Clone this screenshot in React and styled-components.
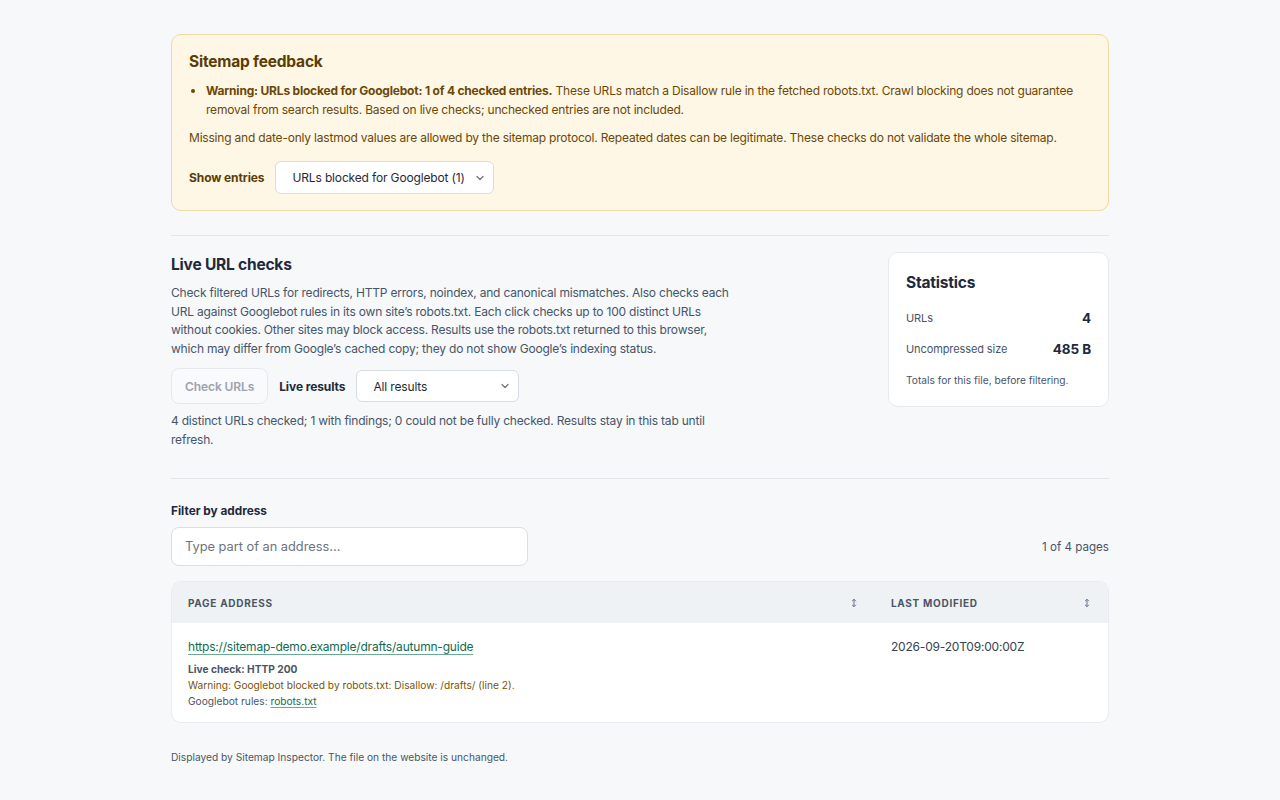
import React, { useState } from 'react';
import styled, { createGlobalStyle } from 'styled-components';

const GlobalStyle = createGlobalStyle`
    body {
        margin: 0;
        background: #f6f8fa;
        font-family: Inter, "Noto Sans", "Liberation Sans", sans-serif;
        color: #1e293b;
    }
    * { box-sizing: border-box; }
`

const Chevron = () => (
    <svg width="10" height="10" viewBox="0 0 10 10" fill="none">
        <path d="M2 3.5 L5 6.5 L8 3.5" stroke="#6b7280" strokeWidth="1.2" strokeLinecap="round" strokeLinejoin="round" />
    </svg>
)

const SortIcon = () => (
    <svg width="6" height="10" viewBox="0 0 6 10" fill="none">
        <path d="M3 1.5 V8.5 M1.3 3 L3 1.3 L4.7 3 M1.3 7 L3 8.7 L4.7 7" stroke="#64748b" strokeWidth="1" strokeLinecap="round" strokeLinejoin="round" />
    </svg>
)

const SelectBox = ({ value, width, height }) => (
    <StyledSelect $width={width} $height={height}>
        <span>{value}</span>
        <Chevron />
    </StyledSelect>
)

export default function App() {
    const [query, setQuery] = useState('');

    return (
        <Page>
            <GlobalStyle />
            <Feedback>
                <FeedbackTitle>Sitemap feedback</FeedbackTitle>
                <FeedbackList>
                    <li>
                        <strong>Warning: URLs blocked for Googlebot: 1 of 4 checked entries.</strong> These URLs match a Disallow rule in the fetched robots.txt. Crawl blocking does not guarantee removal from search results. Based on live checks; unchecked entries are not included.
                    </li>
                </FeedbackList>
                <FeedbackNote>
                    Missing and date-only lastmod values are allowed by the sitemap protocol. Repeated dates can be legitimate. These checks do not validate the whole sitemap.
                </FeedbackNote>
                <ControlRow $inBox>
                    <ControlLabel $tone="brown">Show entries</ControlLabel>
                    <SelectBox value="URLs blocked for Googlebot (1)" width={219} height={33} />
                </ControlRow>
            </Feedback>

            <Divider $top={24} $bottom={16} />

            <ChecksSection>
                <ChecksMain>
                    <SectionTitle>Live URL checks</SectionTitle>
                    <BodyText $after={10}>
                        Check filtered URLs for redirects, HTTP errors, noindex, and canonical mismatches. Also checks each URL against Googlebot rules in its own site’s robots.txt. Each click checks up to 100 distinct URLs without cookies. Other sites may block access. Results use the robots.txt returned to this browser, which may differ from Google’s cached copy; they do not show Google’s indexing status.
                    </BodyText>
                    <ControlRow>
                        <CheckButton disabled>Check URLs</CheckButton>
                        <ControlLabel>Live results</ControlLabel>
                        <SelectBox value="All results" width={163} height={32} />
                    </ControlRow>
                    <BodyText $after={0}>
                        4 distinct URLs checked; 1 with findings; 0 could not be fully checked. Results stay in this tab until refresh.
                    </BodyText>
                </ChecksMain>

                <StatsCard>
                    <StatsTitle>Statistics</StatsTitle>
                    <StatRow>
                        <span>URLs</span>
                        <StatValue>4</StatValue>
                    </StatRow>
                    <StatRow>
                        <span>Uncompressed size</span>
                        <StatValue>485 B</StatValue>
                    </StatRow>
                    <StatsNote>Totals for this file, before filtering.</StatsNote>
                </StatsCard>
            </ChecksSection>

            <Divider $top={29} $bottom={25} />

            <FilterLabel htmlFor="filter">Filter by address</FilterLabel>
            <FilterRow>
                <FilterInput
                    id="filter"
                    placeholder="Type part of an address..."
                    value={query}
                    onChange={e => setQuery(e.target.value)}
                />
                <PageCount>1 of 4 pages</PageCount>
            </FilterRow>

            <Table>
                <HeadRow>
                    <HeadCell>
                        Page address
                        <SortIcon />
                    </HeadCell>
                    <HeadCell>
                        Last modified
                        <SortIcon />
                    </HeadCell>
                </HeadRow>
                <BodyRow>
                    <BodyCell>
                        <UrlLink href="#">https://sitemap-demo.example/drafts/autumn-guide</UrlLink>
                        <Detail $bold>Live check: HTTP 200</Detail>
                        <Detail $tone="warn">Warning: Googlebot blocked by robots.txt: Disallow: /drafts/ (line 2).</Detail>
                        <Detail>Googlebot rules: <SmallLink href="#">robots.txt</SmallLink></Detail>
                    </BodyCell>
                    <BodyCell>
                        <DateText>2026-09-20T09:00:00Z</DateText>
                    </BodyCell>
                </BodyRow>
            </Table>

            <Footer>Displayed by Sitemap Inspector. The file on the website is unchanged.</Footer>
        </Page>
    )
}

const Page = styled.main`
    width: 938px;
    margin: 0 auto;
    padding: 34px 0 30px;
`

const Feedback = styled.section`
    background: #fef7e5;
    border: 1px solid #efd9a6;
    border-radius: 10px;
    padding: 17px 17px 16px;
    color: #6b4708;
`

const FeedbackTitle = styled.h2`
    margin: 0 0 9px;
    font-size: 15.5px;
    letter-spacing: -0.2px;
    font-weight: 700;
    line-height: 20px;
    color: #5c3c06;
`

const FeedbackList = styled.ul`
    margin: 0 0 9px;
    padding-left: 17px;
    font-size: 12px;
    letter-spacing: -0.2px;
    line-height: 19px;
    strong { font-weight: 700; }
`

const FeedbackNote = styled.p`
    margin: 0 0 14px;
    font-size: 12px;
    letter-spacing: -0.2px;
    line-height: 19px;
`

const ControlRow = styled.div`
    display: flex;
    align-items: center;
    gap: 11px;
    margin: ${p => p.$inBox ? '0' : '0 0 8px'};
`

const ControlLabel = styled.span`
    font-size: 12px;
    letter-spacing: -0.1px;
    font-weight: 700;
    color: ${p => p.$tone === 'brown' ? '#5c3c06' : '#1e293b'};
`

const StyledSelect = styled.div`
    display: flex;
    align-items: center;
    justify-content: space-between;
    width: ${p => p.$width}px;
    height: ${p => p.$height}px;
    padding: 0 8px 0 16px;
    background: #fff;
    border: 1px solid #d8dde3;
    border-radius: 6px;
    font-size: 12px;
    letter-spacing: -0.15px;
    color: #1f2937;
`

const Divider = styled.hr`
    border: 0;
    border-top: 1px solid #e3e7eb;
    margin: ${p => p.$top}px 0 ${p => p.$bottom}px;
`

const ChecksSection = styled.section`
    display: flex;
    justify-content: space-between;
    align-items: flex-start;
`

const ChecksMain = styled.div`
    width: 562px;
    padding-top: 3px;
`

const SectionTitle = styled.h2`
    margin: 0 0 9px;
    font-size: 15.5px;
    letter-spacing: -0.2px;
    font-weight: 700;
    line-height: 20px;
    color: #1e293b;
`

const BodyText = styled.p`
    margin: 0 0 ${p => p.$after}px;
    font-size: 12px;
    letter-spacing: -0.2px;
    line-height: 18.5px;
    color: #475569;
`

const CheckButton = styled.button`
    height: 36px;
    padding: 0 13px;
    background: #f8fafc;
    border: 1px solid #e5e9ee;
    border-radius: 8px;
    font: inherit;
    font-size: 12px;
    letter-spacing: -0.1px;
    font-weight: 600;
    color: #9ca3af;
`

const StatsCard = styled.aside`
    width: 221px;
    padding: 20px 17px 19px;
    background: #fff;
    border: 1px solid #e6e9ed;
    border-radius: 10px;
`

const StatsTitle = styled.h3`
    margin: 0 0 9px;
    font-size: 15.5px;
    letter-spacing: -0.2px;
    font-weight: 700;
    line-height: 20px;
    color: #1e293b;
`

const StatRow = styled.div`
    display: flex;
    justify-content: space-between;
    align-items: center;
    height: 31px;
    font-size: 11px;
    letter-spacing: -0.1px;
    color: #475569;
`

const StatValue = styled.span`
    font-size: 13.5px;
    font-weight: 700;
    color: #1e293b;
`

const StatsNote = styled.p`
    margin: 10px 0 0;
    font-size: 10.2px;
    line-height: 13px;
    color: #475569;
`

const FilterLabel = styled.label`
    display: block;
    margin: 0 0 8px;
    font-size: 11.8px;
    line-height: 15px;
    font-weight: 700;
    color: #1e293b;
`

const FilterRow = styled.div`
    display: flex;
    justify-content: space-between;
    align-items: center;
    margin-bottom: 15px;
`

const FilterInput = styled.input`
    width: 357px;
    height: 39px;
    padding: 0 13px;
    background: #fff;
    border: 1px solid #dadfe5;
    border-radius: 8px;
    font: inherit;
    font-size: 12.8px;
    color: #1e293b;
    &::placeholder { color: #6b7280; }
    &:focus { outline: none; }
`

const PageCount = styled.span`
    font-size: 11.6px;
    color: #475569;
`

const Table = styled.div`
    background: #fff;
    border: 1px solid #e8ebef;
    border-radius: 10px;
    overflow: hidden;
`

const HeadRow = styled.div`
    display: grid;
    grid-template-columns: 703px 1fr;
    background: #eef2f5;
    height: 41px;
`

const HeadCell = styled.div`
    display: flex;
    align-items: center;
    justify-content: space-between;
    padding: 0 18px 0 16px;
    font-size: 10px;
    font-weight: 700;
    letter-spacing: 0.07em;
    text-transform: uppercase;
    color: #4b5563;
    & + & { padding-left: 16px; }
`

const BodyRow = styled.div`
    display: grid;
    grid-template-columns: 703px 1fr;
    padding: 12px 0 13px;
`

const BodyCell = styled.div`
    padding: 0 16px;
    & + & { padding-left: 16px; }
`

const UrlLink = styled.a`
    display: inline-block;
    margin-bottom: 5px;
    font-size: 12px;
    letter-spacing: -0.2px;
    line-height: 18px;
    color: #0f6b52;
    text-decoration: underline;
    text-decoration-color: #6aa994;
    text-underline-offset: 3px;
`

const Detail = styled.div`
    font-size: 10.2px;
    line-height: 16px;
    font-weight: ${p => p.$bold ? 700 : 400};
    color: ${p => p.$tone === 'warn' ? '#7a5206' : '#4b5563'};
`

const SmallLink = styled.a`
    color: #0f6b52;
    text-decoration: underline;
    text-decoration-color: #6aa994;
    text-underline-offset: 2px;
`

const DateText = styled.div`
    padding-top: 3px;
    font-size: 12px;
    letter-spacing: -0.2px;
    line-height: 18px;
    color: #374151;
`

const Footer = styled.p`
    margin: 28px 0 0;
    font-size: 10.2px;
    line-height: 13px;
    color: #4b5563;
`
